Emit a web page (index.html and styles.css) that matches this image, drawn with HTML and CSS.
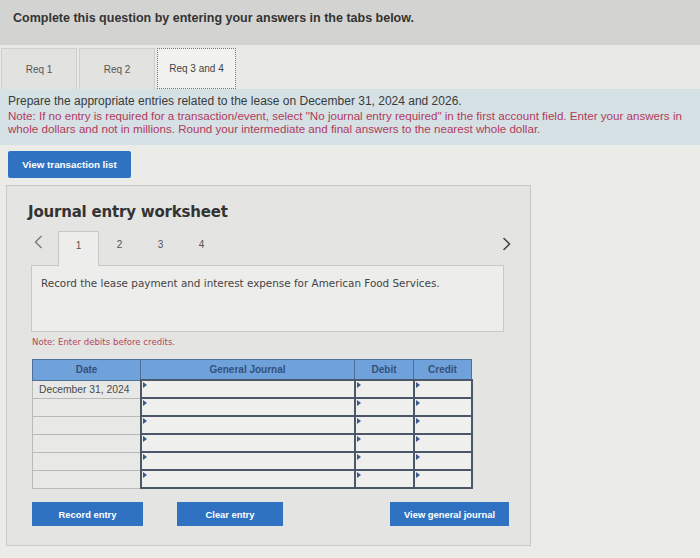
FILE: index.html
```html
<!DOCTYPE html>
<html lang="en">
<head>
    <meta charset="UTF-8">
    <meta name="viewport" content="width=device-width, initial-scale=1.0">
    <title>Journal Entry Worksheet</title>
    <link rel="stylesheet" href="styles.css">
</head>
<body>
<div class="top-bar">Complete this question by entering your answers in the tabs below.</div>

<!-- Requirement tabs -->
<div class="req-tabs">
    <div class="req-tab">Req 1</div>
    <div class="req-tab">Req 2</div>
    <div class="req-tab active">Req 3 and 4</div>
</div>

<div class="info">
    <div class="info-main">Prepare the appropriate entries related to the lease on December 31, 2024 and 2026.</div>
    <div class="info-note">Note: If no entry is required for a transaction/event, select "No journal entry required" in the first account field. Enter your answers in<br>whole dollars and not in millions. Round your intermediate and final answers to the nearest whole dollar.</div>
</div>

<button type="button" class="btn btn-list">View transaction list</button>

<!-- Worksheet panel -->
<div class="panel">
    <h2 class="panel-title">Journal entry worksheet</h2>

    <div class="step-nav">
        <span class="arrow">
            <svg width="9" height="14" viewBox="0 0 9 14"><path d="M7.5 1 L1.5 7 L7.5 13" fill="none" stroke="#7a7a7a" stroke-width="1.4"/></svg>
        </span>
        <div class="step active">1</div>
        <div class="step">2</div>
        <div class="step">3</div>
        <div class="step">4</div>
        <span class="arrow arrow-next">
            <svg width="9" height="14" viewBox="0 0 9 14"><path d="M1.5 1 L7.5 7 L1.5 13" fill="none" stroke="#4a4a4a" stroke-width="1.6"/></svg>
        </span>
    </div>

    <div class="step-box">Record the lease payment and interest expense for American Food Services.</div>

    <p class="debit-note">Note: Enter debits before credits.</p>

    <table class="journal">
        <tr>
            <th class="col-date">Date</th>
            <th class="col-account">General Journal</th>
            <th class="col-debit">Debit</th>
            <th class="col-credit">Credit</th>
        </tr>
        <tbody id="journalRows"></tbody>
    </table>

    <div class="actions">
        <button type="button" class="btn btn-record">Record entry</button>
        <button type="button" class="btn btn-clear">Clear entry</button>
        <button type="button" class="btn btn-view">View general journal</button>
    </div>
</div>

<script>
    // build the six empty entry rows
    var rows = document.getElementById("journalRows");
    for (var i = 0; i < 6; i++) {
        var row = rows.insertRow();
        var dateCell = row.insertCell(0);
        dateCell.className = "date-cell";
        dateCell.textContent = i === 0 ? "December 31, 2024" : "";
        for (var c = 1; c < 4; c++) {
            row.insertCell(c).className = "field";
        }
    }
</script>
</body>
</html>
```

FILE: styles.css
```css
/* page */
body {
    margin: 0;
    padding: 0;
    background-color: #ebebe8;
    font-family: "Liberation Sans", Arial, sans-serif;
    color: #333;
    overflow: hidden;
    width: 700px;
    height: 558px;
}

.top-bar {
    height: 45px;
    box-sizing: border-box;
    padding: 11px 0 0 13px;
    background-color: #d3d3d1;
    font-weight: bold;
    font-size: 12.5px;
    color: #333;
}

/* requirement tabs */
.req-tabs {
    display: flex;
    gap: 2px;
    padding: 3px 0 0 1px;
    height: 44px;
    box-sizing: border-box;
    background-color: #e9e9e7;
}

.req-tab {
    width: 76px;
    height: 41px;
    box-sizing: border-box;
    display: flex;
    align-items: center;
    justify-content: center;
    background-color: #e2e2e0;
    border: 1px solid #cfcfcd;
    border-bottom: none;
    font-size: 10px;
    color: #555;
}

.req-tab.active {
    width: 79px;
    background-color: #f1f1ef;
    border: 1px dotted #777;
    color: #444;
}

/* instructions band */
.info {
    height: 56px;
    box-sizing: border-box;
    padding: 6px 4px 0 8px;
    background-color: #d5e1e5;
    font-size: 12px;
    line-height: 13.5px;
    white-space: nowrap;
}

.info-main {
    color: #3a3a3a;
}

.info-note {
    color: #b13a5c;
    font-size: 11.6px;
}

/* buttons */
.btn {
    display: flex;
    align-items: center;
    justify-content: center;
    border: none;
    padding: 0;
    background-color: #2f72c2;
    color: #fff;
    font-family: "Liberation Sans", Arial, sans-serif;
    font-weight: bold;
    font-size: 9.4px;
    cursor: pointer;
}

.btn-list {
    margin: 6px 0 0 8px;
    width: 123px;
    height: 27px;
    border-radius: 2px;
    font-size: 9.8px;
}

/* worksheet */
.panel {
    margin: 7px 0 0 6px;
    width: 525px;
    height: 361px;
    box-sizing: border-box;
    padding: 0 0 0 24px;
    background-color: #e4e4e2;
    border: 1px solid #c9c9c7;
}

.panel-title {
    margin: 17px 0 0 -3px;
    font-family: "DejaVu Sans", Verdana, sans-serif;
    font-size: 15px;
    font-weight: bold;
    color: #333;
    letter-spacing: -0.2px;
}

.step-nav {
    display: flex;
    align-items: flex-start;
    margin-top: 10px;
    height: 34px;
    width: 481px;
}

.arrow {
    padding: 4px 0 0 3px;
    width: 24px;
}

.arrow-next {
    margin-left: auto;
    padding-top: 6px;
    width: 10px;
}

.step {
    width: 41px;
    height: 34px;
    box-sizing: border-box;
    padding-top: 8px;
    text-align: center;
    font-size: 10px;
    color: #555;
}

.step.active {
    background-color: #ededeb;
    border: 1px solid #c8c8c6;
    border-bottom: none;
    height: 35px;
    margin-bottom: -1px;
    position: relative;
    z-index: 1;
}

.step-box {
    width: 473px;
    height: 67px;
    box-sizing: border-box;
    padding: 11px 0 0 9px;
    background-color: #ededeb;
    border: 1px solid #c8c8c6;
    font-family: "DejaVu Sans", Verdana, sans-serif;
    font-size: 10.4px;
    color: #444;
}

.debit-note {
    margin: 5px 0 0 1px;
    font-family: "DejaVu Sans", Verdana, sans-serif;
    font-size: 8.6px;
    color: #b5475c;
}

/* journal table */
.journal {
    margin: 12px 0 0 1px;
    border-collapse: collapse;
}

.journal th {
    height: 19px;
    padding: 0;
    background-color: #6fa2da;
    border: 1px solid #4e6f96;
    color: #35507a;
    font-weight: bold;
    font-size: 10px;
}

.col-date { width: 107px; }
.col-account { width: 213px; }
.col-debit { width: 58px; }
.col-credit { width: 57px; }

.journal td {
    height: 16px;
    padding: 0;
}

.date-cell {
    background-color: #e8e8e6;
    border: 1px solid #b9b9b7;
    padding-left: 6px !important;
    color: #4a4a4a;
    font-size: 10.3px;
    white-space: nowrap;
}

.field {
    background-color: #efefed;
    border: 2px solid #4d576a;
    position: relative;
}

/* small marker in the corner of each input */
.field::before {
    content: "";
    position: absolute;
    left: 1px;
    top: 1px;
    border-top: 3px solid transparent;
    border-bottom: 3px solid transparent;
    border-left: 4px solid #3d5a86;
}

.actions {
    display: flex;
    margin: 13px 0 0 1px;
}

.actions .btn {
    height: 24px;
}

.btn-record {
    width: 111px;
}

.btn-clear {
    width: 106px;
    margin-left: 34px;
}

.btn-view {
    width: 119px;
    margin-left: 107px;
}
```
